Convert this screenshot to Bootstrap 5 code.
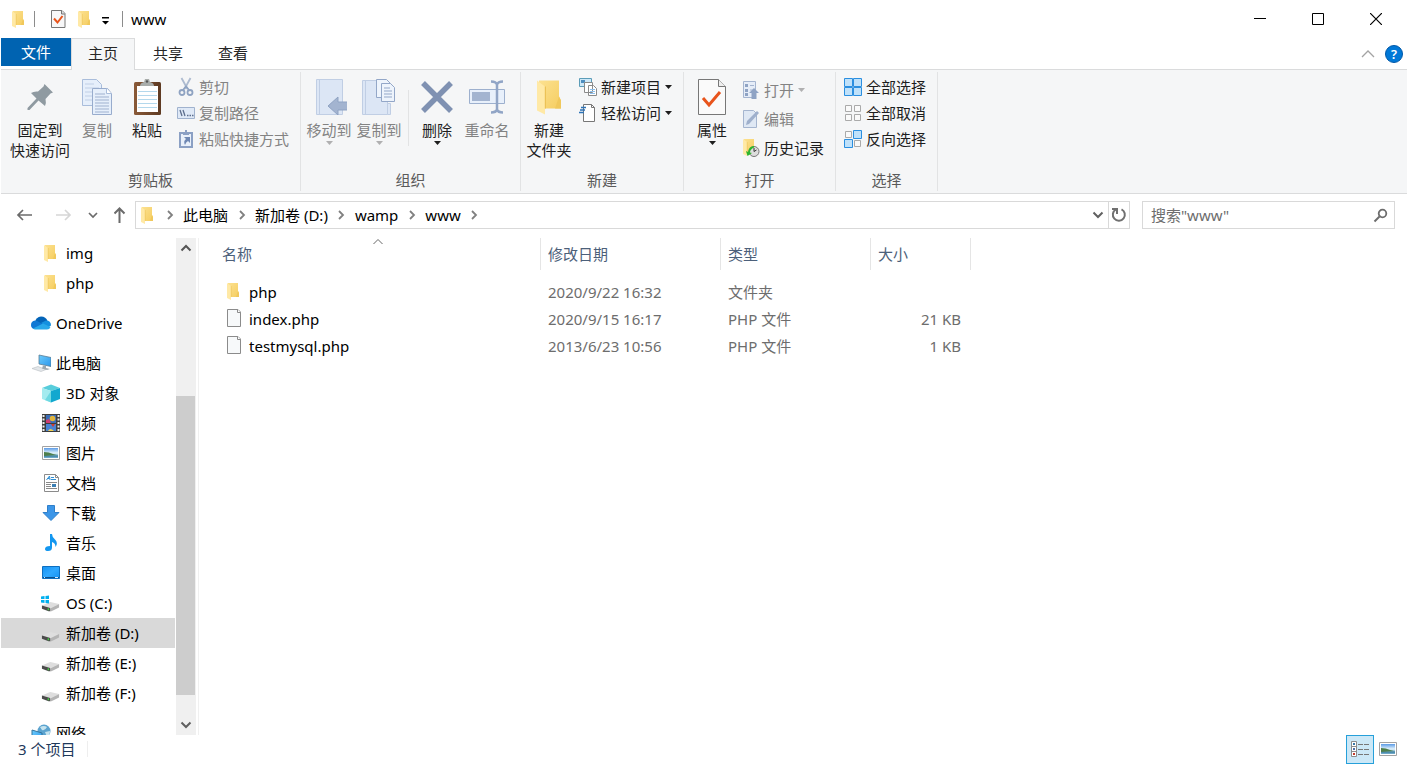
<!DOCTYPE html>
<html lang="zh-CN">
<head>
<meta charset="utf-8">
<meta name="viewport" content="width=device-width, initial-scale=1">
<title>www</title>
<link href="https://cdn.jsdelivr.net/npm/bootstrap@5.3.0/dist/css/bootstrap.min.css" rel="stylesheet">
<script src="https://cdn.jsdelivr.net/npm/bootstrap@5.3.0/dist/js/bootstrap.bundle.min.js"></script>
<style>
  body { font-family: "Noto Sans", "Noto Sans CJK SC", sans-serif; font-size: 15px; line-height: 20px; color: #000; background: #fff; }
  button { font: inherit; color: inherit; background: none; border: 0; padding: 0; }
  svg { display: block; flex: none; }
  a { color: inherit; text-decoration: none; }
  .window { padding: 0 1px; }

  /* title bar */
  .titlebar { height: 38px; padding-left: 9px; }
  .vline { width: 1px; height: 16px; background: #8c8c8c; }
  .quick { gap: 10px; margin: 0 12px 0 14px; }
  .win-btn { width: 58px; height: 38px; }
  .win-btns { padding-right: 2px; }

  /* tabs */
  .tabs { height: 32px; border-bottom: 1px solid #dadbdc; }
  .tab-item { height: 32px; width: 64px; color: #262626; padding-bottom: 3px; }
  .tab-item + .tab-item { margin-left: 1px; }
  .tab-file { height: 28px; width: 70px; background: #0063b1; color: #fff; }
  .tab-active { background: #f5f6f7; border: 1px solid #dadbdc; border-bottom: 0; }

  /* ribbon */
  .ribbon { height: 124px; background: #f5f6f7; border-bottom: 1px solid #dadbdc; padding: 2px 0; color: #1e1e1e; }
  .rgroup { border-right: 1px solid #e2e3e4; }
  .rgroup-body { padding: 0 11px 0 3px; }
  .rgroup-first { padding-left: 7px; }
  .rgroup-label { color: #5a5a5a; text-align: center; line-height: 20px; padding-bottom: 1px; }
  .big-btn { width: 50px; padding-top: 7px; white-space: nowrap; }
  .big-btn-wide { width: 64px; }
  .big-btn svg { height: 36px; margin-bottom: 5px; }
  .big-btn svg.caret { height: 4px; margin: 1px 0 0; }
  .small-col { padding: 2px 0 0 5px; }
  .small-tall { padding-top: 3px; }
  .small-btn { height: 26px; white-space: nowrap; }
  .small-tall .small-btn { height: 29px; }
  .is-off { color: #838383; }
  .rsep { width: 1px; height: 56px; background: #e2e3e4; margin: 18px 3px 0 4px; }

  /* address row */
  .addr-row { height: 44px; padding: 7px 12px 0 15px; }
  .nav-btns { width: 119px; height: 28px; }
  .addr-box, .search-box { height: 28px; border: 1px solid #d9d9d9; }
  .crumb-arrow { width: 27px; display: flex; justify-content: center; }
  .search-box { width: 253px; margin-left: 12px; }
  .search-box input { border: 0; outline: 0; background: none; padding: 0 0 0 8px; color: #6d6d6d; }
  .search-box input::placeholder { color: #6d6d6d; opacity: 1; }
  .search-box svg { margin-right: 11px; }
  .refresh { width: 21px; border-left: 1px solid #d9d9d9; }

  /* navigation pane */
  .panes { min-height: 0; }
  .tree { width: 174px; overflow: hidden; }
  .tree a { height: 30px; flex: none; white-space: nowrap; gap: 6px; padding-left: 40px; }
  .tree a.root { padding-left: 30px; margin-top: 10px; gap: 5px; }
  .tree a.current { background: #d9d9d9; }
  .scroll { width: 20px; margin-left: 1px; background: #f0f0f0; }
  .scroll-btn { height: 20px; flex: none; }
  .track-above { flex: 138 1 0; }
  .thumb { width: 19px; background: #cdcdcd; flex: 299 1 0; }
  .track-below { flex: 20 1 0; }

  /* file list */
  .files { border-left: 1px solid #f0f0f0; margin-left: 2px; padding-left: 16px; }
  .file-table { table-layout: fixed; width: 756px; border-collapse: separate; border-spacing: 0; }
  .c-name { width: 326px; } .c-date { width: 180px; } .c-type { width: 150px; } .c-size { width: 100px; }
  .file-table th { height: 32px; font-weight: 400; color: #4c607a; padding: 0 7px; border-right: 1px solid #e5e5e5; position: relative; }
  .file-table tbody::before { content: ""; display: block; height: 8px; }
  .file-table td { height: 27px; padding: 0 10px 0 7px; color: #6d6d6d; }
  .file-table td:first-child { color: #000; }
  .fname { gap: 7px; }
  .sort-mark { position: absolute; top: 0; left: 50%; transform: translateX(-50%); }

  .status { height: 30px; padding: 0 5px 2px 17px; color: #1e395b; }
  .status-sep { width: 1px; height: 16px; background: #eee; margin-left: 12px; }
  .view-btn { width: 28px; height: 29px; }
  .view-on { background: #cce8f7; border: 1px solid #26a0da; }
</style>
</head>
<body>
<svg width="0" height="0" class="position-absolute">
  <defs>
    <linearGradient id="gFold" x1="0" x2="1" y1="0" y2="1"><stop offset="0" stop-color="#fce190"/><stop offset="1" stop-color="#f5cd60"/></linearGradient>
    <linearGradient id="gSky" x1="0" x2="0" y1="0" y2="1"><stop offset="0" stop-color="#5b9be6"/><stop offset=".5" stop-color="#e3f3fc"/><stop offset=".62" stop-color="#b8d9ea"/><stop offset=".8" stop-color="#3d7fa0"/><stop offset="1" stop-color="#7fb6d4"/></linearGradient>
    <linearGradient id="gScreen" x1="0" x2="1" y1="0" y2="1"><stop offset="0" stop-color="#6ccbfc"/><stop offset="1" stop-color="#2b97ec"/></linearGradient>
    <linearGradient id="gDesk" x1="0" x2="1" y1="0" y2="1"><stop offset="0" stop-color="#1592f2"/><stop offset=".5" stop-color="#2fa8ff"/><stop offset="1" stop-color="#1592f2"/></linearGradient>
    <linearGradient id="gWood" x1="0" x2="1"><stop offset="0" stop-color="#8a5a38"/><stop offset="1" stop-color="#5e3a22"/></linearGradient>
  </defs>
  <symbol id="folder" viewBox="0 0 14 18"><path d="M2 1h10v8l1 2v4H2z" fill="url(#gFold)"/><path d="M12 9l1 2v4h-3z" fill="#f0c85c"/><path d="M1 1l4 3v14l-4-2z" fill="#ffe9a6"/><path d="M5.200 4v11" stroke="#ecc256" stroke-width=".6"/></symbol>
  <symbol id="page" viewBox="0 0 16 20"><path d="M1.500 1.500h10.500l2.500 2.500v14.500h-13z" fill="#f7f9fa" stroke="#8b8b8b"/><path d="M11.500 1.500v3h3" fill="#fff" stroke="#8b8b8b"/></symbol>
  <symbol id="drive" viewBox="0 0 20 14"><path d="M1 7.500L9 4q1-.5 2 0l8 2-8 4q-1 .5-2 0z" fill="#dedede"/><path d="M1 7.500l8 2.500q1 .4 1 1v2.500q-1 .3-2 0L1 11z" fill="#4c4c4c"/><path d="M10 10.500l9-4.500v3.500l-8 4h-1z" fill="#b4b4b4"/><path d="M7 10.500h1.500v2H7z" fill="#3fd13f"/></symbol>
  <symbol id="caret" viewBox="0 0 7 4"><path d="M0 0h7L3.500 4z" fill="currentColor"/></symbol>
  <symbol id="chev" viewBox="0 0 8 10"><path d="M2 1l4 4-4 4" fill="none" stroke="#808080" stroke-width="1.800"/></symbol>
  <symbol id="cdown" viewBox="0 0 12 8"><path d="M1.500 1.500L6 6l4.500-4.500" fill="none" stroke="#606060" stroke-width="2"/></symbol>
  <symbol id="picture" viewBox="0 0 18 14"><path d="M.5.5h17v13H.5z" fill="#fff" stroke="#a2a2a2"/><path d="M2 2h14v10H2z" fill="url(#gSky)"/><path d="M2 6q5 0 9 2l4 1-13 1z" fill="#4e7f4c"/></symbol>
</svg>

<div class="window vh-100 d-flex flex-column overflow-hidden">
  <header class="titlebar d-flex align-items-center flex-shrink-0">
    <svg width="16" height="18"><use href="#folder" width="14" height="18" x="1"/></svg>
    <span class="vline ms-2"></span>
    <div class="quick d-flex align-items-center">
      <button aria-label="属性"><svg width="18" height="20"><path d="M2.500 1.500h10.500l3 3v14h-13.500z" fill="#f7f7f8" stroke="#777"/><path d="M12.500 1.500v3.500h3.500" fill="#ddd" stroke="#777"/><path d="M5 9.500l3.500 4 5-6.500" fill="none" stroke="#e8541c" stroke-width="2"/></svg></button>
      <button aria-label="新建文件夹"><svg width="14" height="18"><use href="#folder"/></svg></button>
      <button aria-label="自定义快速访问工具栏" class="pt-1"><svg width="9" height="9"><path d="M1 0h7v1.500H1zM1 4h7L4.500 7.500z"/></svg></button>
    </div>
    <span class="vline me-2"></span>
    <span>www</span>
    <div class="win-btns ms-auto d-flex">
      <button class="win-btn d-flex align-items-center justify-content-center" aria-label="最小化"><svg width="12" height="12"><path d="M0 5h12v1H0z"/></svg></button>
      <button class="win-btn d-flex align-items-center justify-content-center" aria-label="最大化"><svg width="12" height="12"><path d="M.5.5h11v11H.5z" fill="none" stroke="#000"/></svg></button>
      <button class="win-btn d-flex align-items-center justify-content-center" aria-label="关闭"><svg width="12" height="12"><path d="M0 0l12 12M12 0L0 12" stroke="#000" stroke-width="1.200"/></svg></button>
    </div>
  </header>

  <nav class="tabs d-flex flex-shrink-0">
    <button class="tab-file">文件</button>
    <button class="tab-item tab-active">主页</button>
    <button class="tab-item">共享</button>
    <button class="tab-item">查看</button>
    <div class="ms-auto d-flex align-items-center gap-2 pe-1">
      <button aria-label="折叠功能区"><svg width="14" height="8"><path d="M1 7l6-6 6 6" fill="none" stroke="#a3a3a3" stroke-width="1.300"/></svg></button>
      <button aria-label="帮助"><svg width="20" height="18"><circle cx="11" cy="9" r="8.500" fill="#0078d7" stroke="#0058a8"/><text x="11" y="14" font-size="13" font-weight="600" text-anchor="middle" fill="#fff">?</text></svg></button>
    </div>
  </nav>

  <section class="ribbon d-flex flex-shrink-0">
    <div class="rgroup d-flex flex-column justify-content-between">
      <div class="rgroup-body rgroup-first d-flex align-items-start">
        <button class="big-btn big-btn-wide d-flex flex-column align-items-center">
          <svg width="34" height="36"><path d="M21.500 5L30 13.500 27.500 14.500 22.500 20Q23.500 24.500 22 27L15.500 21.500 6.500 31H4.500V29L13.500 19.500 8 14Q11 12 15 12.500L20.500 7.500z" fill="#8f9aa1"/></svg>
          <span>固定到<br>快速访问</span></button>
        <button class="big-btn is-off d-flex flex-column align-items-center">
          <svg width="32" height="36"><g fill="#e6effb" stroke="#a9bddb"><path d="M1.500.5h14l5 5v21h-19z"/><path d="M4 5h9M4 9h14M4 13h7M4 17h7M4 21h7" stroke="#c0cfe6"/><path d="M11.500 9.500h15l4 5v21h-19z" stroke="#98accd"/><path d="M25.500 9.500v5h5" fill="#fff"/><path d="M14 15h10M14 18h14M14 21h14M14 24h14M14 27h14M14 30h14M14 33h14" stroke="#9fb1cf"/></g></svg>
          <span>复制</span></button>
        <button class="big-btn d-flex flex-column align-items-center">
          <svg width="28" height="36"><rect x="1" y="3" width="27" height="33" rx="1.500" fill="url(#gWood)"/><path d="M4 7h21v26H4z" fill="#fff"/><path d="M5 12.500h19M5 16.500h19M5 20.500h19M5 24.500h19M5 28.500h19" stroke="#b4d8ec"/><path d="M7 7q0-3 4-4l1-3h4l1 3q4 1 4 4z" fill="#a9adab"/><circle cx="14" cy="2.500" r="1.200" fill="#555"/></svg>
          <span>粘贴</span></button>
        <div class="small-col is-off">
          <button class="small-btn d-flex align-items-center gap-1"><svg width="18" height="20"><g fill="none" stroke="#8fa3c2" stroke-width="1.800"><path d="M4.500 1l6 11M13.500 1l-6 11" stroke="#adbbd0"/><circle cx="5" cy="15.500" r="2.500"/><circle cx="13" cy="15.500" r="2.500"/><path d="M6 13l3-3.500 3 3.500"/></g></svg>剪切</button>
          <button class="small-btn d-flex align-items-center gap-1"><svg width="18" height="12"><path d="M.5.5h17v11H.5z" fill="#dfe9f7" stroke="#a0b2ce"/><path d="M3 3l2 6M6 3l2 6M10 8.500h1.500M12.500 8.500H14M15 8.500h1.500" stroke="#5d6f8e" stroke-width="1.300"/></svg>复制路径</button>
          <button class="small-btn d-flex align-items-center gap-1"><svg width="18" height="20"><path d="M3 4h12v14H3z" fill="#e9f0fa" stroke="#8ba0c4" stroke-width="2"/><path d="M6 3h6v3H6zM8 1h2v2H8z" fill="#8ba0c4"/><path d="M7 8h6v6l-2-2q-2 1-3 4-2-4 1-6z" fill="#6f88b4"/></svg>粘贴快捷方式</button>
        </div>
      </div>
      <div class="rgroup-label">剪贴板</div>
    </div>

    <div class="rgroup d-flex flex-column justify-content-between">
      <div class="rgroup-body d-flex align-items-start pe-2">
        <button class="big-btn is-off d-flex flex-column align-items-center">
          <svg width="36" height="36" viewBox="-1 0 36 36"><path d="M4.500.5h26v35h-26z" fill="#dce6f5" stroke="#c0cee4"/><path d="M7.500 1v35" stroke="#c0cee4"/><path d="M16 27l10-9v5h10v8H26v5z" fill="#a3b4d0" stroke="#8fa3c3"/></svg>
          <span>移动到</span><svg class="caret" width="7" height="4" opacity=".6"><use href="#caret"/></svg></button>
        <button class="big-btn is-off d-flex flex-column align-items-center">
          <svg width="34" height="36"><path d="M.5 1.500h25v34H.5z" fill="#dce6f5" stroke="#c0cee4"/><path d="M3.500 2v34" stroke="#c0cee4"/><path d="M25.500 24.500h3v11h-3z" fill="#dce6f5" stroke="#c0cee4"/><g fill="#eef4fc" stroke="#93a7c8"><path d="M14.500.5h10l4 4v14h-14z"/><path d="M19.500 4.500h9l4 4v14h-13z"/><path d="M22 9h6M22 12h8M22 15h8M22 18h8"/></g></svg>
          <span>复制到</span><svg class="caret" width="7" height="4" opacity=".6"><use href="#caret"/></svg></button>
        <span class="rsep"></span>
        <button class="big-btn d-flex flex-column align-items-center">
          <svg width="34" height="36"><path d="M3 4l28 28M31 4L3 32" stroke="#7f91b2" stroke-width="5.500"/></svg>
          <span>删除</span><svg class="caret" width="7" height="4"><use href="#caret"/></svg></button>
        <button class="big-btn is-off d-flex flex-column align-items-center">
          <svg width="38" height="36"><path d="M1.500 10.500h35v14h-35z" fill="#e8f0fb" stroke="#9db0ce"/><path d="M4 13h18v9H4z" fill="#a3b4d0"/><path d="M23 2.500q5 0 6 3 1-3 6-3M29 5v26M23 33.500q5 0 6-3 1 3 6 3" fill="none" stroke="#91a5c6" stroke-width="2.500"/></svg>
          <span>重命名</span></button>
      </div>
      <div class="rgroup-label">组织</div>
    </div>

    <div class="rgroup d-flex flex-column justify-content-between">
      <div class="rgroup-body d-flex align-items-start">
        <button class="big-btn d-flex flex-column align-items-center">
          <svg width="28" height="36"><use href="#folder" x="0" y="-1" width="28" height="37"/></svg>
          <span>新建<br>文件夹</span></button>
        <div class="small-col">
          <button class="small-btn d-flex align-items-center gap-1"><svg width="18" height="20"><path d="M.5 1.500h12v8H.5z" fill="#cde8f8" stroke="#5b9cb8"/><path d="M2 3h4v3H2z" fill="#4f8fc0"/><path d="M5.500 5.500h8v10h-8zM9.500 8.500h5l3 3v7h-8z" fill="#fff" stroke="#8a8a8a"/><path d="M11 12.500h5M11 14.500h5M11 16.500h5" stroke="#8fc0ec"/></svg>新建项目<svg width="7" height="4"><use href="#caret"/></svg></button>
          <button class="small-btn d-flex align-items-center gap-1"><svg width="18" height="20"><path d="M4.500 1.500h8l3 3v14h-11z" fill="#fff" stroke="#777"/><path d="M12.500 1.500v3h3" fill="none" stroke="#777"/><path d="M2 4.500h5M1 7h5M0 9.500h5" stroke="#2f74b8" stroke-width="1.300"/></svg>轻松访问<svg width="7" height="4"><use href="#caret"/></svg></button>
        </div>
      </div>
      <div class="rgroup-label">新建</div>
    </div>

    <div class="rgroup d-flex flex-column justify-content-between">
      <div class="rgroup-body d-flex align-items-start">
        <button class="big-btn d-flex flex-column align-items-center">
          <svg width="30" height="36"><path d="M1.500.5h20l7 7v28h-27z" fill="#fafafa" stroke="#777"/><path d="M21.500.5v7h7" fill="#eee" stroke="#777"/><path d="M6 19l6 7 11-13" fill="none" stroke="#e8541c" stroke-width="3"/></svg>
          <span>属性</span><svg class="caret" width="7" height="4"><use href="#caret"/></svg></button>
        <div class="small-col small-tall">
          <button class="small-btn is-off d-flex align-items-center gap-1"><svg width="18" height="20"><path d="M1.500 1.500h12v16h-12z" fill="#e6edf8" stroke="#a5b5d0"/><path d="M3 4h3v3H3zM3 9h3v3H3zM3 13h3v3H3z" fill="#8fa3c4"/><path d="M8 5.500h4M8 10h3" stroke="#a5b5d0"/><path d="M12 8l5 5h-2.500v6h-5v-6H7z" fill="#8fa3c4"/></svg>打开<svg width="7" height="4" opacity=".6"><use href="#caret"/></svg></button>
          <button class="small-btn is-off d-flex align-items-center gap-1"><svg width="18" height="20"><path d="M1.500 1.500h10l3 3v14h-13z" fill="#dfe8f4" stroke="#a5b5cf"/><path d="M4 16l1-4L15 2l2 2L7 15z" fill="#9fb0cc"/></svg>编辑</button>
          <button class="small-btn d-flex align-items-center gap-1"><svg width="18" height="20"><use href="#folder" width="14" height="18"/><circle cx="12" cy="13.500" r="5" fill="#ddd" stroke="#777"/><path d="M12 10v3.500l2.500-1.500" fill="none" stroke="#333"/><path d="M12 8q-5 0-6 6l-2-1 1.500 5 4.500-3-2-.5q0-3 4-5z" fill="#2db52d"/></svg>历史记录</button>
        </div>
      </div>
      <div class="rgroup-label">打开</div>
    </div>

    <div class="rgroup d-flex flex-column justify-content-between">
      <div class="rgroup-body">
        <div class="small-col">
          <button class="small-btn d-flex align-items-center gap-1"><svg width="18" height="18"><path d="M.5.5h8v8h-8zM9.500.5h8v8h-8zM.5 9.500h8v8h-8zM9.500 9.500h8v8h-8z" fill="#bfe1fa" stroke="#2b8fe0"/></svg>全部选择</button>
          <button class="small-btn d-flex align-items-center gap-1"><svg width="18" height="18"><path d="M1.500 1.500h6v6h-6zM10.500 1.500h6v6h-6zM1.500 10.500h6v6h-6zM10.500 10.500h6v6h-6z" fill="#fafafa" stroke="#aaa"/></svg>全部取消</button>
          <button class="small-btn d-flex align-items-center gap-1"><svg width="18" height="18"><path d="M1.500 1.500h6v6h-6zM10.500 10.500h6v6h-6z" fill="#fafafa" stroke="#aaa"/><path d="M9.500.5h8v8h-8zM.5 9.500h8v8h-8z" fill="#bfe1fa" stroke="#2b8fe0"/></svg>反向选择</button>
        </div>
      </div>
      <div class="rgroup-label">选择</div>
    </div>
  </section>

  <div class="addr-row d-flex flex-shrink-0">
    <div class="nav-btns d-flex align-items-center">
      <button aria-label="后退"><svg width="17" height="12"><path d="M7 1L2 6l5 5M2 6h14" fill="none" stroke="#6b6b6b" stroke-width="1.700"/></svg></button>
      <button aria-label="前进" class="ms-3 ps-1"><svg width="19" height="12"><path d="M12 1l5 5-5 5M3 6h14" fill="none" stroke="#d6d6d6" stroke-width="1.700"/></svg></button>
      <button aria-label="最近浏览的位置" class="ms-3"><svg width="10" height="7"><path d="M1 1l4 4 4-4" fill="none" stroke="#6b6b6b" stroke-width="1.700"/></svg></button>
      <button aria-label="上移" class="ms-3"><svg width="12" height="16"><path d="M.5 6.500l5-5 5 5M5.500 2v14" fill="none" stroke="#6b6b6b" stroke-width="2"/></svg></button>
    </div>
    <div class="addr-box d-flex align-items-center flex-grow-1">
      <svg width="16" height="18" class="ms-1"><use href="#folder" width="14" height="18"/></svg>
      <span class="crumb-arrow"><svg width="8" height="10"><use href="#chev"/></svg></span><a href="#">此电脑</a>
      <span class="crumb-arrow"><svg width="8" height="10"><use href="#chev"/></svg></span><a href="#">新加卷 (D:)</a>
      <span class="crumb-arrow"><svg width="8" height="10"><use href="#chev"/></svg></span><a href="#">wamp</a>
      <span class="crumb-arrow"><svg width="8" height="10"><use href="#chev"/></svg></span><a href="#">www</a>
      <span class="crumb-arrow"><svg width="8" height="10"><use href="#chev"/></svg></span>
      <button class="ms-auto me-1" aria-label="以前的位置"><svg width="12" height="8"><use href="#cdown"/></svg></button>
      <button class="refresh h-100 d-flex align-items-center justify-content-center" aria-label="刷新"><svg width="16" height="16"><path d="M10.500 2.300A6 6 0 1 1 4.800 2.500" fill="none" stroke="#707070" stroke-width="2"/><path d="M1 1h6v6H5V3H1z" fill="#707070"/></svg></button>
    </div>
    <div class="search-box d-flex align-items-center">
      <input type="text" class="flex-grow-1" aria-label="搜索www" placeholder='搜索"www"'>
      <svg width="18" height="15"><circle cx="9.500" cy="5.500" r="3.800" fill="none" stroke="#6d6d6d" stroke-width="1.800"/><path d="M6.500 8.500l-5 5" stroke="#6d6d6d" stroke-width="2"/></svg>
    </div>
  </div>

  <main class="panes d-flex flex-grow-1">
    <nav class="tree d-flex flex-column flex-shrink-0">
      <a href="#" class="d-flex align-items-center"><svg width="19" height="18"><use href="#folder" x="2" width="14" height="18"/></svg>img</a>
      <a href="#" class="d-flex align-items-center"><svg width="19" height="18"><use href="#folder" x="2" width="14" height="18"/></svg>php</a>
      <a href="#" class="root d-flex align-items-center"><svg width="20" height="14"><path d="M4 6Q5 1 10 .5q5 0 6.500 4.500L10 9z" fill="#0364b8"/><path d="M10 7l5-2.500q5 0 5 5l-3 2z" fill="#1490df"/><path d="M3 13Q0 12 0 9q0-4 4-4.500 2 0 4 1.500l7 4-7 3z" fill="#0f78d4"/><path d="M2 12.500l10-5 7.500 3.500q-1 2.500-3.500 2.500H4q-1 0-2-1z" fill="#28a8ea"/></svg>OneDrive</a>
      <a href="#" class="root d-flex align-items-center"><svg width="20" height="18"><path d="M8 1l12 2.500v9L8 10z" fill="url(#gScreen)" stroke="#5b7d96" stroke-width=".8"/><path d="M1 14.500l6-2 8 3-5 2z" fill="#e3e7ea" stroke="#b8bdc1" stroke-width=".6"/><path d="M12 11.500l3 .6v2l4 1-3 1-5-1.500z" fill="#9ca8b0"/></svg>此电脑</a>
      <a href="#" class="d-flex align-items-center"><svg width="19" height="19"><path d="M1 4l9-3.500L19 4l-9 3z" fill="#58cddb"/><path d="M1 4l9 3v11.500L1 15z" fill="#a4ebef"/><path d="M10 7l9-3v11l-9 3.500z" fill="#12a8cf"/><path d="M10 7v11.500L4 16z" fill="#6ed9e2"/></svg>3D 对象</a>
      <a href="#" class="d-flex align-items-center"><svg width="19" height="20"><path d="M1 1h18v18H1z" fill="#3e3e3e"/><path d="M5 2h10v8H5z" fill="#3a6db8"/><path d="M5 11h10v7H5z" fill="#4a83d4"/><circle cx="11.500" cy="5.500" r="2.800" fill="#e0b43c"/><path d="M5 7l3-1 2 4H5z" fill="#cf3c72"/><path d="M10 11h4l-2 3z" fill="#cf3c32"/><path d="M7 18q2-4 6 0z" fill="#f0cf50"/><path d="M2.500 2v17M17.500 2v17" stroke="#eee" stroke-width="2" stroke-dasharray="2 1.500"/></svg>视频</a>
      <a href="#" class="d-flex align-items-center"><svg width="19" height="14"><use href="#picture" width="18" height="14" x="1"/></svg>图片</a>
      <a href="#" class="d-flex align-items-center"><svg width="19" height="20"><path d="M3.500 1.500h11l3 3v14h-14z" fill="#fff" stroke="#8b8b8b"/><path d="M14.500 1.500v3h3" fill="none" stroke="#8b8b8b"/><path d="M5.500 7l3-4 .5 4M6.500 5.500h2M10 4.500h3M10 6.500h5" fill="none" stroke="#2f8fd4"/><path d="M5 9.500h11M5 11.500h5M5 13.500h5M5 15.500h11" stroke="#888"/><path d="M11 11h4v3h-4z" fill="#3b7fb4"/></svg>文档</a>
      <a href="#" class="d-flex align-items-center"><svg width="19" height="18"><path d="M6.500 1.500h7v7h4.500L10 16.500 2 8.500h4.500z" fill="#3c96e8" stroke="#2f7fca"/></svg>下载</a>
      <a href="#" class="d-flex align-items-center"><svg width="19" height="20"><path d="M9 1h2q0 3 3 5.500 3.500 3.500.5 7.500 0-4-3.500-5v5.500q0 3.500-4 3.500-3 0-3-2 0-3 5-3z" fill="#1397f0"/></svg>音乐</a>
      <a href="#" class="d-flex align-items-center"><svg width="19" height="14"><path d="M1.500.5h17v12h-17z" fill="url(#gDesk)" stroke="#0e6fc0"/><path d="M2 11h16v1H2z" fill="#094f8c"/><path d="M3 11h1v1H3zM14 11h3v1h-3z" fill="#cfe9ff"/></svg>桌面</a>
      <a href="#" class="d-flex align-items-center"><svg width="19" height="18"><use href="#drive" y="4" width="19" height="14"/><path d="M0 2.500L3.500 2v3H0zM4.500 2L8 1.500V5H4.500zM0 6h3.500v3L0 8.500zM4.500 6H8v3.500L4.500 9z" fill="#00b0f0"/></svg>OS (C:)</a>
      <a href="#" class="current d-flex align-items-center"><svg width="19" height="18"><use href="#drive" y="4" width="19" height="14"/></svg>新加卷 (D:)</a>
      <a href="#" class="d-flex align-items-center"><svg width="19" height="18"><use href="#drive" y="4" width="19" height="14"/></svg>新加卷 (E:)</a>
      <a href="#" class="d-flex align-items-center"><svg width="19" height="18"><use href="#drive" y="4" width="19" height="14"/></svg>新加卷 (F:)</a>
      <a href="#" class="root d-flex align-items-center"><svg width="20" height="18"><circle cx="13" cy="7" r="6.500" fill="#5ba3cf"/><path d="M9 3q4-2 7 0-2 4-5 3zM14 8l5-1q0 4-3 6z" fill="#c5e3ee"/><path d="M1 6l10 3v9H1z" fill="url(#gScreen)" stroke="#35759e"/></svg>网络</a>
    </nav>
    <div class="scroll d-flex flex-column flex-shrink-0">
      <button class="scroll-btn d-flex align-items-center justify-content-center" aria-label="向上滚动"><svg width="12" height="8"><path d="M1.500 6.500L6 2l4.500 4.500" fill="none" stroke="#555" stroke-width="2"/></svg></button>
      <div class="track-above"></div><div class="thumb"></div><div class="track-below"></div>
      <button class="scroll-btn d-flex align-items-center justify-content-center" aria-label="向下滚动"><svg width="12" height="8"><use href="#cdown"/></svg></button>
    </div>
    <section class="files flex-grow-1 overflow-hidden">
      <table class="file-table">
        <colgroup><col class="c-name"><col class="c-date"><col class="c-type"><col class="c-size"></colgroup>
        <thead><tr>
          <th>名称<svg class="sort-mark" width="10" height="7"><path d="M.5 6L5 1.500 9.500 6" fill="none" stroke="#666"/></svg></th>
          <th>修改日期</th><th>类型</th><th>大小</th></tr></thead>
        <tbody>
          <tr><td><span class="fname d-flex align-items-center"><svg width="20" height="20"><use href="#folder" x="4" width="14" height="18"/></svg>php</span></td><td>2020/9/22 16:32</td><td>文件夹</td><td></td></tr>
          <tr><td><span class="fname d-flex align-items-center"><svg width="20" height="20"><use href="#page" x="4" y="-1" width="16" height="20"/></svg>index.php</span></td><td>2020/9/15 16:17</td><td>PHP 文件</td><td class="text-end">21 KB</td></tr>
          <tr><td><span class="fname d-flex align-items-center"><svg width="20" height="20"><use href="#page" x="4" y="-1" width="16" height="20"/></svg>testmysql.php</span></td><td>2013/6/23 10:56</td><td>PHP 文件</td><td class="text-end">1 KB</td></tr>
        </tbody>
      </table>
    </section>
  </main>

  <footer class="status d-flex align-items-center flex-shrink-0">
    <span>3 个项目</span>
    <span class="status-sep"></span>
    <div class="ms-auto d-flex">
      <button class="view-btn view-on d-flex align-items-center justify-content-center" aria-label="详细信息"><svg width="18" height="16"><path d="M.5.5h5v15h-5zM.5 5.500h5M.5 10.500h5" fill="#fff" stroke="#8c8c8c"/><path d="M2 2h2v2H2z" fill="#3778a8"/><path d="M2 7h2v2H2z" fill="#4d6fa8"/><path d="M2 12h2v2H2z" fill="#c43c2c"/><path d="M7 3.500h5M13 3.500h5M7 8.500h5M13 8.500h5M7 13.500h5M13 13.500h5" stroke="#777"/></svg></button>
      <button class="view-btn d-flex align-items-center justify-content-center" aria-label="大缩略图"><svg width="18" height="14"><use href="#picture"/></svg></button>
    </div>
  </footer>
</div>
</body>
</html>
